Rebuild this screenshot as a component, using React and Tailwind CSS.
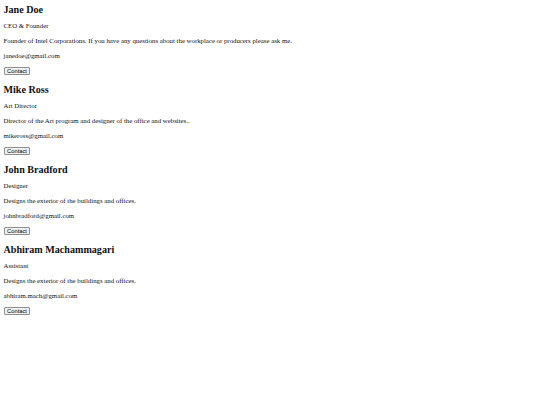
import React from 'react';

const people = [
  {
    name: 'Jane Doe',
    role: 'CEO & Founder',
    bio: 'Founder of Intel Corporations. If you have any questions about the workplace or producers please ask me.',
    email: 'janedoe@gmail.com',
  },
  {
    name: 'Mike Ross',
    role: 'Art Director',
    bio: 'Director of the Art program and designer of the office and websites..',
    email: 'mikeross@gmail.com',
  },
  {
    name: 'John Bradford',
    role: 'Designer',
    bio: 'Designs the exterior of the buildings and offices.',
    email: 'johnbradford@gmail.com',
  },
  {
    name: 'Abhiram Machammagari',
    role: 'Assistant',
    bio: 'Designs the exterior of the buildings and offices.',
    email: 'abhiram.mach@gmail.com',
  },
];

const PersonCard = ({ person }) => (
  <div className="pb-[9px]">
    <h2 className="text-[10.1px] leading-[12px] font-bold">{person.name}</h2>
    <p className="mt-[6px] text-[6.8px] leading-[8px]">{person.role}</p>
    <p className="mt-[7px] text-[6.8px] leading-[8px]">{person.bio}</p>
    <p className="mt-[7px] text-[6.8px] leading-[8px]">{person.email}</p>
    <button className="mt-[7px] block h-[8px] px-[2.5px] border border-[#8f8f8f] rounded-[1px] bg-[#efefef] font-['Liberation_Sans',sans-serif] text-[5.8px] leading-[6px] text-black">
      Contact
    </button>
  </div>
);

export default function App() {
  return (
    <div className="min-h-[405px] bg-white px-[3.5px] pt-[3.5px] font-['Liberation_Serif',serif] text-[#111]">
      {people.map((p) => (
        <PersonCard key={p.name} person={p} />
      ))}
    </div>
  );
}
